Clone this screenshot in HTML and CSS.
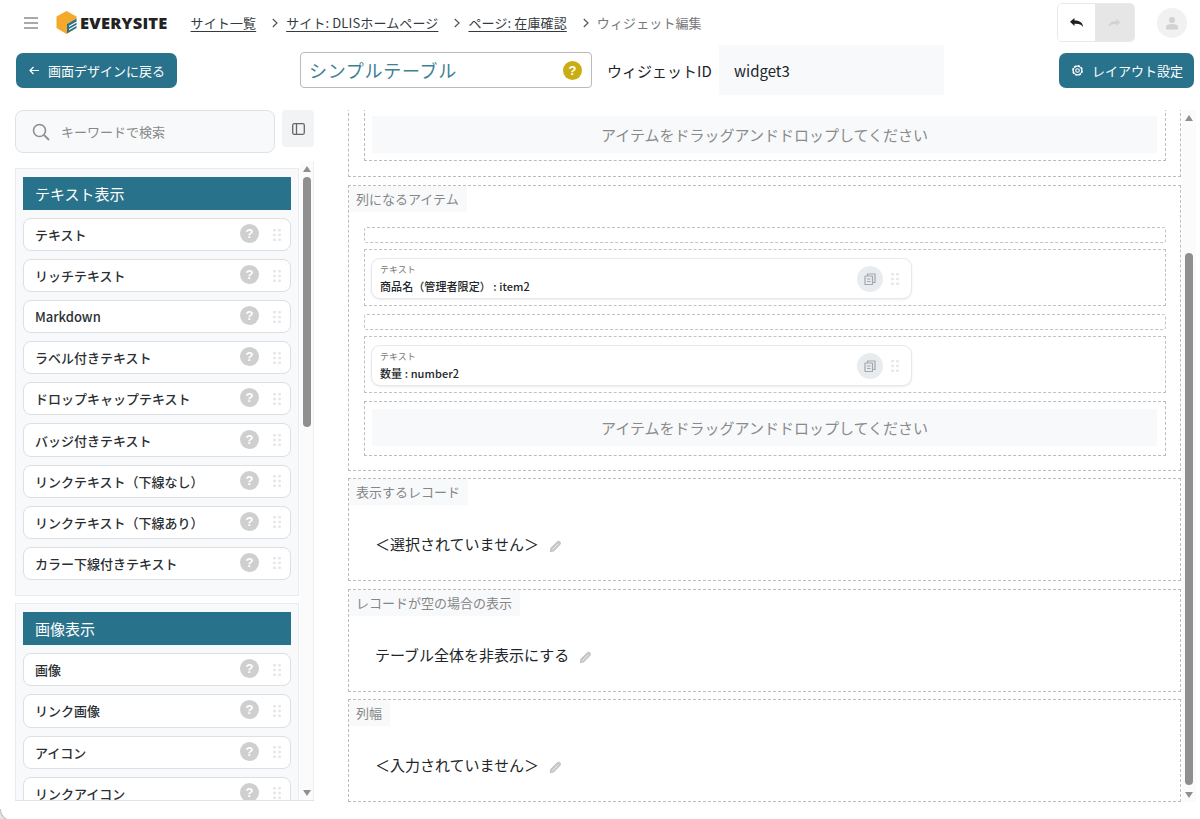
FILE: index.html
```html
<!DOCTYPE html>
<html lang="ja">
<head>
<meta charset="utf-8">
<title>ウィジェット編集</title>
<link rel="stylesheet" href="styles.css">
</head>
<body>
<svg class="defs" width="0" height="0" aria-hidden="true">
  <symbol id="dots" viewBox="0 0 8 12"><g fill="#e6e7e9"><rect x="0" y="0" width="3" height="2.600" rx="1"/><rect x="5" y="0" width="3" height="2.600" rx="1"/><rect x="0" y="4.700" width="3" height="2.600" rx="1"/><rect x="5" y="4.700" width="3" height="2.600" rx="1"/><rect x="0" y="9.400" width="3" height="2.600" rx="1"/><rect x="5" y="9.400" width="3" height="2.600" rx="1"/></g></symbol>
  <symbol id="chev" viewBox="0 0 6 10"><path d="M.8 1L5 5L.8 9" fill="none" stroke="#555" stroke-width="1.200"/></symbol>
  <symbol id="copy" viewBox="0 0 12 12"><g fill="none" stroke="#a3a7b0" stroke-width="1.200"><rect x="1" y="3" width="7.500" height="8.500" rx=".6"/><path d="M3.500 3V1h7.500v8.500H8.500"/><path d="M3 6h3.500M3 8.500h3.500"/></g></symbol>
  <symbol id="pencil" viewBox="0 0 13 13"><path d="M.8 12.200l.5-4.200L8.300 1.200c.8-.8 2-.6 2.900.3s1.100 2.100.3 2.900L4.800 11.600z" fill="#c6c6c6"/><path d="M3.200 9.800L9.300 3.700" stroke="#efefef" stroke-width="1"/></symbol>
</svg>
<div class="app">
  <header class="topbar">
    <svg class="menu-icon" width="14" height="12" viewBox="0 0 14 12"><path d="M0 1h14M0 6h14M0 11h14" stroke="#555" stroke-width="1.200"/></svg>
    <svg class="logo-mark" width="21" height="23" viewBox="0 0 21 23">
      <path d="M10.500 0L20.500 5.500V17L10.500 23L.5 17V5.500Z" fill="#f4a92a"/>
      <path d="M20.500 7.500V17L11 22.500V13Z" fill="#fff"/>
      <path d="M11 13L20.500 7.500V10.500L13 14.800V16L20.500 11.700V13.800L13 18V19.200L20.500 15V17L11 22.500Z" fill="#2a7189"/>
    </svg>
    <span class="logo-text">EVERYSITE</span>
    <nav class="crumbs">
      <a class="crumb-link">サイト一覧</a><svg class="sep"><use href="#chev"/></svg>
      <a class="crumb-link">サイト: DLISホームページ</a><svg class="sep"><use href="#chev"/></svg>
      <a class="crumb-link">ページ: 在庫確認</a><svg class="sep"><use href="#chev"/></svg>
      <span class="crumb-current">ウィジェット編集</span>
    </nav>
    <div class="undo-group">
      <span class="undo-on"><svg width="13" height="9" viewBox="0 0 13 9"><path d="M0 3.800L4.500 0V2.400C9.500 2.300 13 4.500 13 9C11.500 6.500 9 5.500 4.500 5.700V8Z" fill="#1e1e1e"/></svg></span>
      <span class="undo-off"><svg width="13" height="8" viewBox="0 0 13 9"><path d="M13 3.800L8.500 0V2.400C3.500 2.300 0 4.500 0 9C1.500 6.500 4 5.500 8.500 5.700V8Z" fill="#d2d2d2"/></svg></span>
    </div>
    <span class="avatar"><svg width="12" height="14" viewBox="0 0 14 15"><circle cx="7" cy="4" r="3.600" fill="#d2d2d2"/><path d="M0 15v-2.500C0 10 2.500 8.800 7 8.800s7 1.200 7 3.700V15z" fill="#d2d2d2"/></svg></span>
  </header>

  <div class="toolbar">
    <button class="btn back-btn"><svg width="10" height="9" viewBox="0 0 10 9"><path d="M10 4.500H1M4.500 1L1 4.500L4.500 8" fill="none" stroke="#fff" stroke-width="1.200"/></svg><span>画面デザインに戻る</span></button>
    <div class="title-input"><span class="title-text">シンプルテーブル</span><span class="help-gold">?</span></div>
    <span class="id-label">ウィジェットID</span>
    <div class="id-value">widget3</div>
    <button class="btn layout-btn"><svg width="13" height="13" viewBox="0 0 13 13"><circle cx="6.500" cy="6.500" r="4.700" fill="none" stroke="#fff" stroke-width="1.500" stroke-dasharray="2.600 1"/><circle cx="6.500" cy="6.500" r="4.200" fill="none" stroke="#fff" stroke-width="1"/><circle cx="6.500" cy="6.500" r="1.800" fill="none" stroke="#fff" stroke-width="1.100"/></svg><span>レイアウト設定</span></button>
  </div>

  <div class="workspace">
    <aside class="sidebar">
      <div class="search-row">
        <div class="search-box">
          <svg width="18" height="18" viewBox="0 0 18 18"><circle cx="7.500" cy="7.500" r="6" fill="none" stroke="#8f8f8f" stroke-width="1.600"/><path d="M12 12l5 5" stroke="#8f8f8f" stroke-width="1.800"/></svg>
          <span>キーワードで検索</span>
        </div>
        <span class="panel-toggle"><svg width="13" height="12" viewBox="0 0 13 12"><rect x=".7" y=".7" width="11.600" height="10.600" rx="1.500" fill="none" stroke="#666" stroke-width="1.300"/><path d="M4.500 1v10" stroke="#666" stroke-width="1.300"/></svg></span>
      </div>
      <div class="palette">
        <div class="palette-scroll">
          <section class="group">
            <h2 class="group-title">テキスト表示</h2>
            <div class="item"><span>テキスト</span><i class="help">?</i><svg class="drag"><use href="#dots"/></svg></div>
            <div class="item"><span>リッチテキスト</span><i class="help">?</i><svg class="drag"><use href="#dots"/></svg></div>
            <div class="item"><span>Markdown</span><i class="help">?</i><svg class="drag"><use href="#dots"/></svg></div>
            <div class="item"><span>ラベル付きテキスト</span><i class="help">?</i><svg class="drag"><use href="#dots"/></svg></div>
            <div class="item"><span>ドロップキャップテキスト</span><i class="help">?</i><svg class="drag"><use href="#dots"/></svg></div>
            <div class="item"><span>バッジ付きテキスト</span><i class="help">?</i><svg class="drag"><use href="#dots"/></svg></div>
            <div class="item"><span>リンクテキスト（下線なし）</span><i class="help">?</i><svg class="drag"><use href="#dots"/></svg></div>
            <div class="item"><span>リンクテキスト（下線あり）</span><i class="help">?</i><svg class="drag"><use href="#dots"/></svg></div>
            <div class="item"><span>カラー下線付きテキスト</span><i class="help">?</i><svg class="drag"><use href="#dots"/></svg></div>
          </section>
          <section class="group">
            <h2 class="group-title">画像表示</h2>
            <div class="item"><span>画像</span><i class="help">?</i><svg class="drag"><use href="#dots"/></svg></div>
            <div class="item"><span>リンク画像</span><i class="help">?</i><svg class="drag"><use href="#dots"/></svg></div>
            <div class="item"><span>アイコン</span><i class="help">?</i><svg class="drag"><use href="#dots"/></svg></div>
            <div class="item"><span>リンクアイコン</span><i class="help">?</i><svg class="drag"><use href="#dots"/></svg></div>
          </section>
        </div>
        <div class="scrollbar palette-bar"><i class="arrow-up"></i><i class="thumb palette-thumb"></i><i class="arrow-down"></i></div>
      </div>
    </aside>

    <main class="editor">
      <div class="editor-scroll">
        <div class="editor-content">
          <section class="field field-clipped">
            <div class="dropzone"><div class="drop-hint">アイテムをドラッグアンドドロップしてください</div></div>
          </section>
          <section class="field field-columns">
            <div class="field-label">列になるアイテム</div>
            <div class="slot"></div>
            <div class="card-row">
              <div class="card">
                <div class="card-text"><small>テキスト</small><strong>商品名（管理者限定） : item2</strong></div>
                <span class="copy"><svg width="12" height="12"><use href="#copy"/></svg></span>
                <svg class="drag card-drag"><use href="#dots"/></svg>
              </div>
            </div>
            <div class="slot"></div>
            <div class="card-row">
              <div class="card">
                <div class="card-text"><small>テキスト</small><strong>数量 : number2</strong></div>
                <span class="copy"><svg width="12" height="12"><use href="#copy"/></svg></span>
                <svg class="drag card-drag"><use href="#dots"/></svg>
              </div>
            </div>
            <div class="dropzone"><div class="drop-hint">アイテムをドラッグアンドドロップしてください</div></div>
          </section>
          <section class="field field-value field-tight">
            <div class="field-label">表示するレコード</div>
            <div class="value"><span class="value-text">＜選択されていません＞</span><svg class="pencil"><use href="#pencil"/></svg></div>
          </section>
          <section class="field field-value">
            <div class="field-label">レコードが空の場合の表示</div>
            <div class="value"><span class="value-text">テーブル全体を非表示にする</span><svg class="pencil"><use href="#pencil"/></svg></div>
          </section>
          <section class="field field-value field-tight">
            <div class="field-label">列幅</div>
            <div class="value"><span class="value-text">＜入力されていません＞</span><svg class="pencil"><use href="#pencil"/></svg></div>
          </section>
        </div>
      </div>
      <div class="scrollbar editor-bar"><i class="arrow-up"></i><i class="thumb editor-thumb"></i><i class="arrow-down"></i></div>
    </main>
  </div>
</div>
</body>
</html>
```

FILE: styles.css
```css
* { box-sizing: border-box; }
html, body { margin: 0; height: 100%; background: #fff; overflow: hidden; }
body { font-family: "Noto Sans CJK JP", "Noto Sans", sans-serif; color: #212529; font-size: 13px; }
.defs { position: absolute; }
.app { position: relative; width: 1200px; height: 819px; display: flex; flex-direction: column; }
.app::after { content: ""; position: absolute; left: 0; bottom: 0; width: 12px; height: 10px; background: radial-gradient(circle at 100% 0, transparent 10.500px, #c4c4c4 11.500px, #e6e6e6 13px); }

.topbar { height: 45px; display: flex; align-items: center; padding-left: 24px; flex: none; }
.menu-icon { flex: none; }
.logo-mark { margin-left: 18px; flex: none; }
.logo-text { margin-left: 3px; font-family: "Open Sans", sans-serif; font-weight: 800; font-size: 16.500px; letter-spacing: .2px; color: #222; }
.crumbs { margin-left: 23px; display: flex; align-items: center; font-size: 13px; line-height: 20px; letter-spacing: .12px; }
.crumb-link { color: #343a40; text-decoration: underline; text-underline-offset: 3px; }
.sep { width: 6px; height: 10px; margin: 1px 8px 0 16px; flex: none; }
.crumb-current { color: #777; }
.undo-group { margin-left: auto; width: 78px; height: 39px; display: flex; border: 1px solid #e9e9e9; border-radius: 5px; overflow: hidden; }
.undo-on, .undo-off { display: flex; align-items: center; justify-content: center; }
.undo-on { width: 37px; background: #fff; }
.undo-off { flex: 1; background: #e6e6e6; }
.avatar { width: 30px; height: 30px; border-radius: 50%; background: #f1f1f2; margin: 0 13px 0 22px; display: flex; align-items: center; justify-content: center; }

.toolbar { height: 50px; flex: none; display: flex; align-items: center; padding: 0 6px 0 16px; }
.btn { height: 35px; border: 0; border-radius: 7px; background: #29728b; color: #fff; font: inherit; font-size: 13px; display: flex; align-items: center; padding: 0; }
.back-btn { width: 161px; padding-left: 13px; }
.back-btn span { margin-left: 9px; }
.title-input { margin-left: 123px; width: 292px; height: 36px; border: 1px solid #bbb; border-radius: 4px; display: flex; align-items: center; padding: 0 9px 0 8px; justify-content: space-between; }
.title-text { font-size: 18px; color: #3f8096; letter-spacing: .7px; }
.help-gold { width: 19px; height: 19px; border-radius: 50%; background: #c9ad12; color: #fff; font-family: "Liberation Sans", sans-serif; font-weight: 700; font-size: 13px; display: flex; align-items: center; justify-content: center; }
.id-label { margin-left: 15px; font-size: 15px; width: 112px; flex: none; color: #212529; white-space: nowrap; }
.id-value { width: 225px; height: 50px; background: #f8f9fa; display: flex; align-items: center; padding-left: 15px; font-size: 15px; color: #212529; }
.layout-btn { margin-left: auto; width: 135px; padding-left: 12px; }
.layout-btn span { margin-left: 8px; }

.workspace { margin-top: 15px; height: 692px; flex: none; display: flex; }
.sidebar { margin-left: 15px; width: 299px; flex: none; display: flex; flex-direction: column; }
.search-row { display: flex; align-items: flex-start; height: 51px; flex: none; }
.search-box { width: 260px; height: 43px; border: 1px solid #dee2e6; border-radius: 8px; background: #f8f9fa; display: flex; align-items: center; padding-left: 16px; color: #888; }
.search-box span { margin-left: 11px; }
.panel-toggle { margin-left: 7px; width: 32px; height: 37px; background: #f1f3f5; border-radius: 4px; display: flex; align-items: center; justify-content: center; }
.palette { height: 640px; display: flex; border-bottom: 1px solid #e3e3e3; overflow: hidden; }
.palette-scroll { width: 285px; padding-top: 7px; overflow: hidden; flex: none; }
.group { width: 284px; background: #f8f9fa; border: 1px solid #e9ecef; padding: 8px 7px 15px; margin-bottom: 7.500px; }
.group-title { margin: 0 0 8px; height: 33px; background: #29728b; color: #fff; font-size: 15px; font-weight: 400; line-height: 34px; padding-left: 12px; }
.item { height: 33.100px; margin-bottom: 8px; background: #fff; border: 1px solid #dcdfe3; border-radius: 8px; display: flex; align-items: center; padding-left: 12px; font-weight: 500; font-size: 13px; color: #2b2f33; }
.item:last-child { margin-bottom: 0; }
.item span { flex: 1; margin-left: -1px; }
.help { width: 19px; height: 19px; border-radius: 50%; background: #cfcfcf; color: #fff; font: 700 13px/19px "Liberation Sans", sans-serif; text-align: center; margin: -2px 0 0 -1px; flex: none; }
.drag { width: 8px; height: 12px; margin: 0 9px 0 14px; flex: none; }

.scrollbar { width: 14px; flex: none; display: flex; flex-direction: column; align-items: center; background: #fbfbfb; }
.palette-bar { border-right: 1px solid #eee; padding-top: 5px; }
.arrow-up { width: 0; height: 0; border: 4px solid transparent; border-top: 0; border-bottom: 6px solid #8f8f8f; flex: none; }
.arrow-down { width: 0; height: 0; border: 4px solid transparent; border-bottom: 0; border-top: 6px solid #8f8f8f; flex: none; margin-top: auto; margin-bottom: 4px; }
.thumb { width: 8px; background: #8f8f8f; border-radius: 4px; flex: none; }
.palette-thumb { height: 250px; margin-top: 5px; }

.editor { margin-left: 34px; width: 848px; display: flex; flex: none; }
.editor-scroll { width: 834px; height: 692px; overflow: hidden; flex: none; }
.editor-content { display: flex; flex-direction: column; gap: 8px; }
.field { width: 833px; border: 1px dashed #bcbcbc; padding: 0 15px; }
.field-clipped { height: 120px; margin-top: -53px; padding-top: 5px; border-top-color: transparent; display: flex; flex-direction: column; justify-content: flex-end; padding-bottom: 15px; }
.dropzone { border: 1px dashed #bcbcbc; padding: 7px 7px 9px; width: 802px; }
.field-clipped .dropzone { height: 100%; display: flex; align-items: flex-end; padding-bottom: 7px; }
.drop-hint { height: 37px; background: #f8f9fa; color: #8a8a8a; font-size: 15px; line-height: 38px; text-align: center; width: 785px; }
.field-columns { height: 286px; }
.field-label { margin-left: -15px; width: fit-content; height: 26px; line-height: 26px; background: #f8f9fa; color: #868686; padding: 0 8px 0 7px; font-size: 13px; }
.slot { height: 16px; width: 802px; border: 1px dashed #c2c2c2; border-radius: 3px; margin-top: 15px; }
.card-row { height: 57px; width: 802px; border: 1px dashed #c2c2c2; margin-top: 7px; padding: 8px 6px; }
.slot + .card-row { margin-top: 6px; }
.card-row + .slot { margin-top: 8px; }
.card-row + .dropzone { margin-top: 8px; }
.field-columns > .field-label + .slot { margin-top: 15px; }
.card { width: 541px; height: 41px; border: 1px solid #e6e8ea; border-radius: 9px; box-shadow: 0 1px 2px rgba(0,0,0,.08); display: flex; align-items: center; padding-left: 8px; background: #fff; }
.card-text { flex: 1; display: flex; flex-direction: column; }
.card-text small { font-size: 9px; color: #777; line-height: 14px; }
.card-text strong { font-size: 11px; font-weight: 500; color: #212529; line-height: 18px; letter-spacing: .08px; }
.copy { width: 26px; height: 26px; border-radius: 50%; background: #e9ecef; display: flex; align-items: center; justify-content: center; flex: none; }
.card-drag { margin: 0 12px 0 8px; }
.field-value { height: 103px; }
.field-tight { margin-top: -1px; }
.value { display: flex; align-items: center; margin-top: 28px; padding-left: 11px; }
.value-text { font-size: 15px; color: #212529; }
.pencil { width: 13px; height: 13px; margin: 5px 0 0 10px; flex: none; }
.editor-bar { height: 692px; padding-top: 5px; }
.editor-thumb { height: 532px; margin-top: 132px; }
```
